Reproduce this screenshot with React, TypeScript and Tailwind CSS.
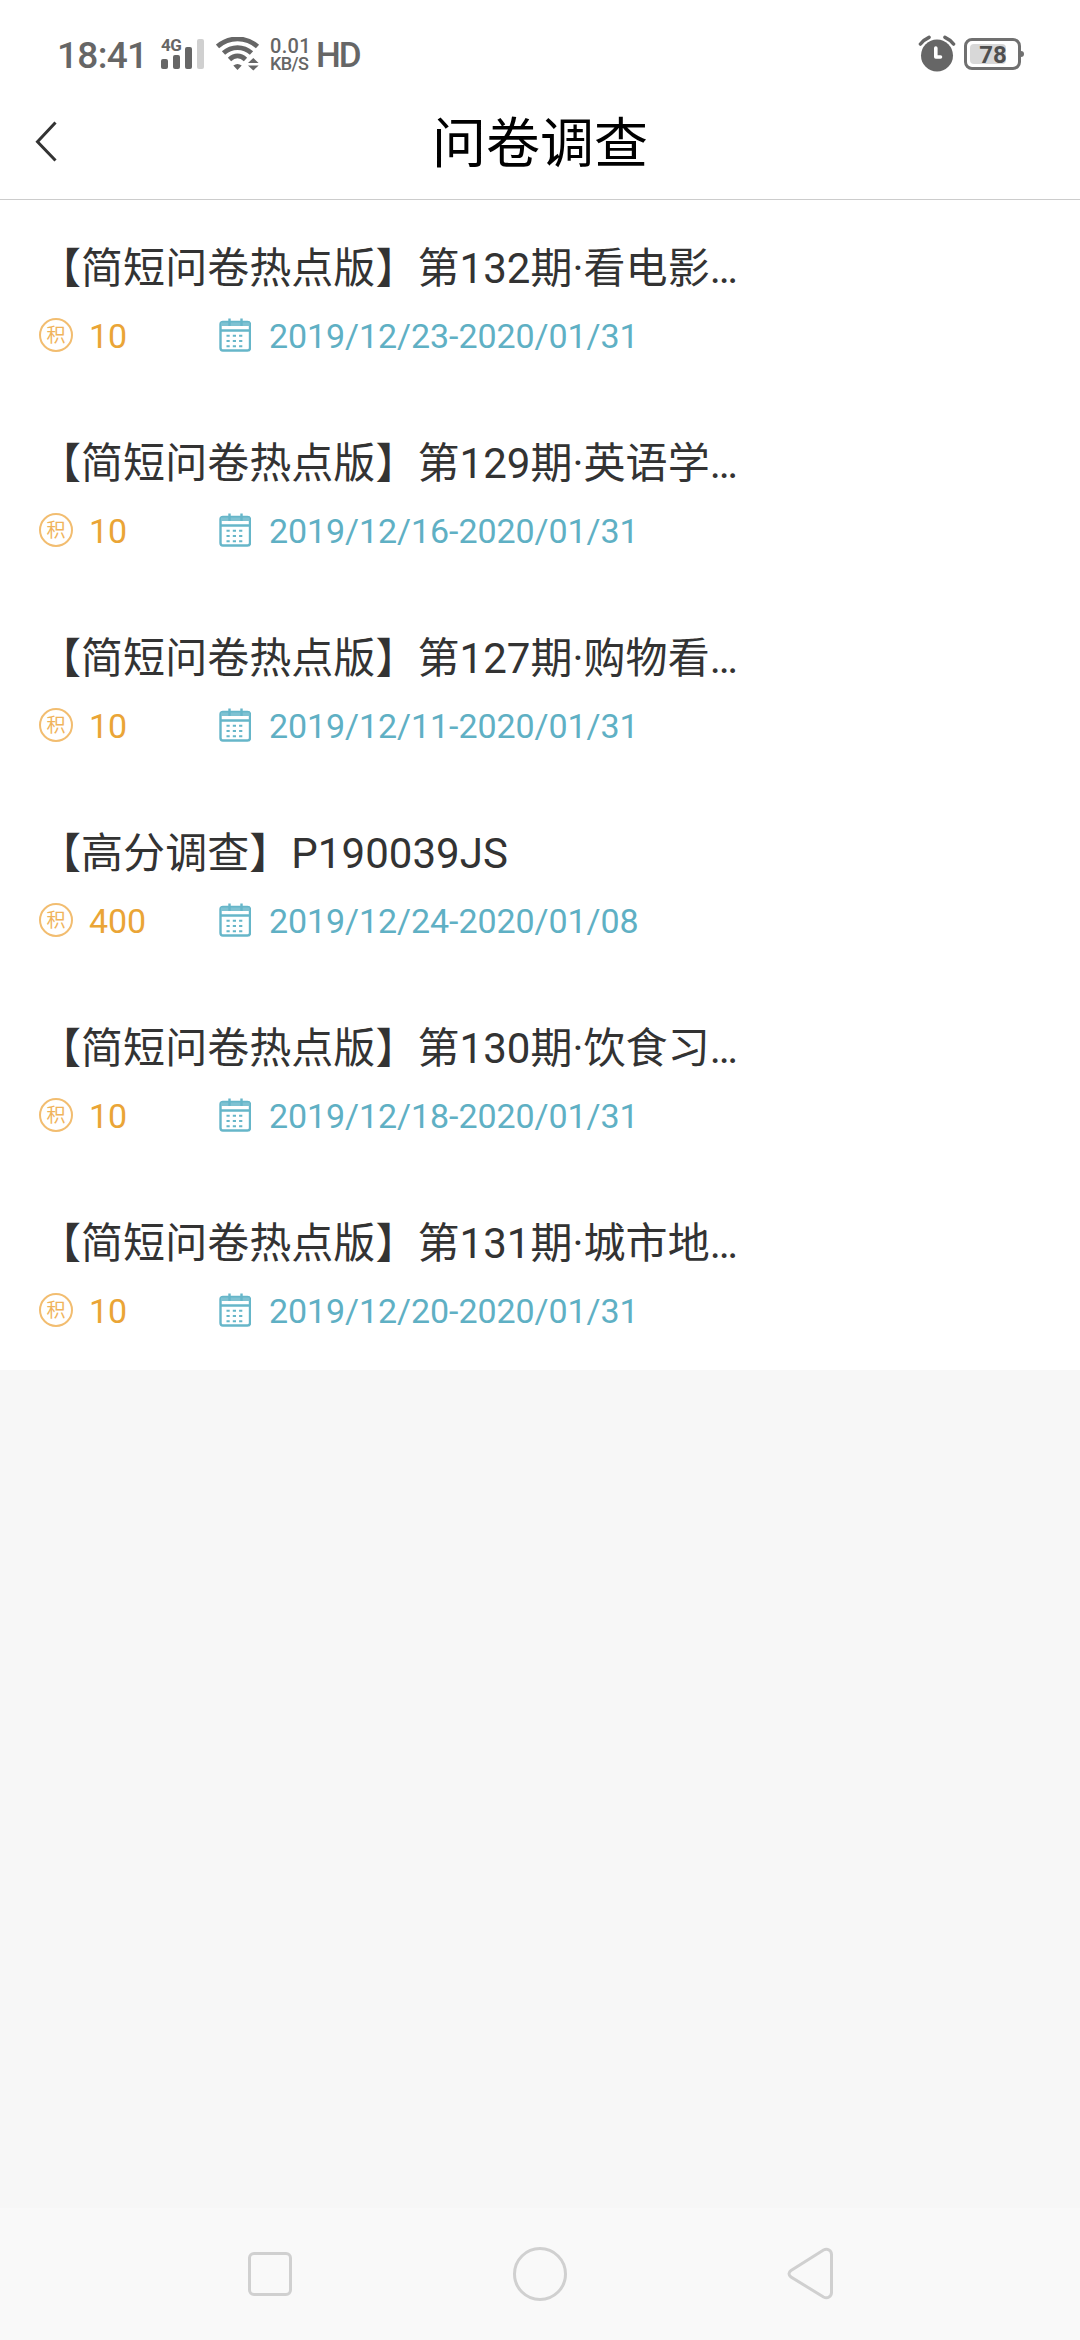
import React from 'react';

interface Survey {
  title: string;
  points: number;
  period: string;
}

const surveys: Survey[] = [
  { title: '【简短问卷热点版】第132期·看电影…', points: 10, period: '2019/12/23-2020/01/31' },
  { title: '【简短问卷热点版】第129期·英语学…', points: 10, period: '2019/12/16-2020/01/31' },
  { title: '【简短问卷热点版】第127期·购物看…', points: 10, period: '2019/12/11-2020/01/31' },
  { title: '【高分调查】P190039JS', points: 400, period: '2019/12/24-2020/01/08' },
  { title: '【简短问卷热点版】第130期·饮食习…', points: 10, period: '2019/12/18-2020/01/31' },
  { title: '【简短问卷热点版】第131期·城市地…', points: 10, period: '2019/12/20-2020/01/31' },
];

function SignalIcon() {
  return (
    <div className="relative ml-[19px] h-8 w-11">
      <svg viewBox="0 0 44 32" className="h-8 w-11">
        <g fill="#666666">
          <rect x="0" y="21" width="7" height="10" rx="2" />
          <rect x="12" y="17" width="7" height="14" rx="2" />
          <rect x="24" y="9" width="7" height="22" rx="2" />
        </g>
        <rect x="36" y="1" width="7" height="30" rx="2" fill="#d0d0d0" />
      </svg>
      <span className="absolute left-0 top-0 text-[17px] leading-[15px] font-bold tracking-[-0.5px]">4G</span>
    </div>
  );
}

function WifiIcon() {
  return (
    <svg viewBox="0 0 44 34" className="ml-[11px] h-[34px] w-11" fill="none" stroke="#666666" strokeWidth="4.8">
      <path d="M1.5 9.5C13 -0.6 30 -0.6 41.5 9.5" />
      <path d="M7.5 16C15.5 8.7 27.5 8.7 35.5 16" />
      <path d="M13.5 22.5C18.5 17.8 24.5 17.8 29.5 22.5" />
      <g fill="#666666" stroke="none">
        <path d="M17.3 28.6Q21.5 25.4 25.7 28.6L21.5 33Z" />
        <path d="M32 26L37.3 21L42.6 26Z" />
        <path d="M32 28.5L37.3 33.5L42.6 28.5Z" />
      </g>
    </svg>
  );
}

function AlarmIcon() {
  return (
    <svg viewBox="0 0 38 38" className="size-[38px]" fill="none">
      <circle cx="19" cy="20.5" r="16" fill="#666666" />
      <path d="M2.5 9Q6 4.5 11 2.3M35.5 9Q32 4.5 27 2.3" stroke="#666666" strokeWidth="3.6" strokeLinecap="round" />
      <path d="M17.8 13V22H22.5" stroke="#ffffff" strokeWidth="3.6" strokeLinecap="round" strokeLinejoin="round" />
    </svg>
  );
}

function Battery() {
  return (
    <div className="ml-2 flex items-center">
      <div className="flex h-8 w-[57px] items-center rounded-[8px] border-3 border-[#707070] pl-[3px]">
        <div className="flex h-5 w-9 items-center justify-center rounded-[4px] bg-[#d8d8d8] pt-0.5 pl-2.5 text-[24px] leading-5 font-bold text-[#4f4f4f]">
          78
        </div>
      </div>
      <div className="h-1.5 w-[3px] rounded-r-[3px] bg-[#707070]" />
    </div>
  );
}

function StatusBar() {
  return (
    <div className="flex h-[109px] items-start justify-between pt-[34px] pr-14 pl-[57px] text-[#666666]">
      <div className="flex h-10 items-center">
        <span className="w-[85px] pt-[3px] text-[37px] leading-10 font-medium tracking-[-0.7px]">18:41</span>
        <SignalIcon />
        <WifiIcon />
        <div className="ml-[10px] w-10 pt-px font-medium">
          <div className="text-[20px] leading-[17px] tracking-[0.3px]">0.01</div>
          <div className="text-[18px] leading-[17px] tracking-[-0.6px]">KB/S</div>
        </div>
        <span className="ml-[6px] pt-[3px] text-[35px] leading-10 font-medium tracking-[-2px]">HD</span>
      </div>
      <div className="flex h-10 items-center">
        <AlarmIcon />
        <Battery />
      </div>
    </div>
  );
}

function TitleBar() {
  return (
    <header className="grid h-[91px] grid-cols-[1fr_auto_1fr] items-start border-b border-[#cccccc]">
      <button className="ml-[34px] w-6 pt-[12px]" aria-label="返回">
        <svg viewBox="0 0 24 42" className="h-[42px] w-6" fill="none" stroke="#333333" strokeWidth="3">
          <path d="M21.5 1.5L3.5 20.7L21.5 39.5" />
        </svg>
      </button>
      <h1 className="pt-0.5 text-[54px] leading-[68px] text-black">问卷调查</h1>
    </header>
  );
}

function PointsIcon() {
  return (
    <span className="flex size-[34px] items-center justify-center rounded-full border-[2.5px] border-[#f2bd70] text-[19px] leading-[19px] text-[#f0b35a]">
      积
    </span>
  );
}

function CalendarIcon() {
  return (
    <svg viewBox="0 0 32 34" className="h-[34px] w-8" fill="none" stroke="#66b6c9" strokeWidth="2.4">
      <rect x="1.5" y="4" width="29.5" height="28.5" rx="2.5" />
      <path d="M2 4.5H30.5V8H2Z" fill="#7fc2d2" stroke="none" />
      <path d="M1.5 12.5H31M10.5 0.5V8M22.5 0.5V8" />
      <path d="M7.5 17.8H23.5M7.5 23H23.5M7.5 28.2H23.5" strokeWidth="2" strokeDasharray="3.2 3.1" />
    </svg>
  );
}

function SurveyRow({ title, points, period }: Survey) {
  return (
    <li className="h-[195px] pt-10 pl-[39px]">
      <p className="h-[57px] text-[42px] leading-[57px] tracking-[0.05px] whitespace-nowrap text-[#333333]">{title}</p>
      <div className="mt-[18px] flex h-10 items-center text-[34px] leading-10 tracking-[-0.08px]">
        <PointsIcon />
        <span className="ml-4 w-[130px] pt-0.5 text-[#eaa536]">{points}</span>
        <CalendarIcon />
        <span className="ml-[18px] pt-0.5 text-[#5fb0c4]">{period}</span>
      </div>
    </li>
  );
}

function NavBar() {
  return (
    <nav className="flex h-[132px] items-center justify-center gap-[214px] bg-[#f9f9f9]">
      <svg viewBox="0 0 56 56" className="size-14" fill="none" stroke="#d0d0d0" strokeWidth="3">
        <rect x="7.5" y="7.5" width="41" height="41" rx="4.5" />
      </svg>
      <svg viewBox="0 0 56 56" className="size-14" fill="none" stroke="#d0d0d0" strokeWidth="3">
        <circle cx="28" cy="28" r="25.5" />
      </svg>
      <svg viewBox="0 0 56 56" className="size-14" fill="none" stroke="#d0d0d0" strokeWidth="3">
        <path d="M9 24.5L41.5 4Q44.5 2.5 47 4Q49.5 5.5 49.5 8.5V46.5Q49.5 49.5 47 51Q44.5 52.5 41.5 51L9 31Q5 27.5 9 24.5Z" />
      </svg>
    </nav>
  );
}

export default function App() {
  return (
    <div className="flex h-[2340px] w-[1080px] flex-col overflow-hidden bg-[#f7f7f7] font-['Roboto','Noto_Sans_CJK_SC',sans-serif]">
      <div className="bg-white">
        <StatusBar />
        <TitleBar />
        <ul>
          {surveys.map((survey) => (
            <SurveyRow key={survey.title} {...survey} />
          ))}
        </ul>
      </div>
      <div className="flex-1" />
      <NavBar />
    </div>
  );
}
